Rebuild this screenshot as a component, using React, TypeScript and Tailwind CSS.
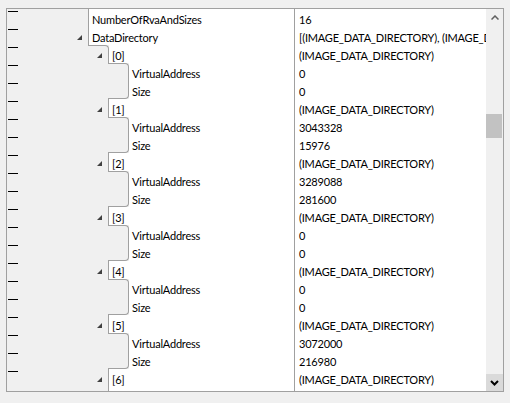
import React from 'react';

type Step = 'down' | 'up' | null;

interface TreeRow {
  name: string;
  value: string;
  level: 0 | 1 | 2;
  expandable?: boolean;
  step?: Step;
}

const rows: TreeRow[] = [
  { name: 'NumberOfRvaAndSizes', value: '16', level: 0 },
  { name: 'DataDirectory', value: '[(IMAGE_DATA_DIRECTORY), (IMAGE_DATA_DIRECTORY)]', level: 0, expandable: true },
];

const dirs = [
  ['0', '0'],
  ['3043328', '15976'],
  ['3289088', '281600'],
  ['0', '0'],
  ['0', '0'],
  ['3072000', '216980'],
];

dirs.forEach(([va, size], i) => {
  rows.push({ name: `[${i}]`, value: '(IMAGE_DATA_DIRECTORY)', level: 1, expandable: true, step: i === 0 ? 'down' : null });
  rows.push({ name: 'VirtualAddress', value: va, level: 2, step: 'down' });
  rows.push({ name: 'Size', value: size, level: 2, step: 'up' });
});
rows.push({ name: '[6]', value: '(IMAGE_DATA_DIRECTORY)', level: 1, expandable: true });

function Expander() {
  return (
    <svg width="5" height="5" viewBox="0 0 5 5" className="block">
      <polygon points="5,0 5,5 0,5" fill="#404040" />
    </svg>
  );
}

function Dash() {
  return <div className="ml-[1px] mt-[2px] h-px w-[10px] shrink-0 bg-black" />;
}

function Row({ row }: { row: TreeRow }) {
  const { level, step } = row;
  const nameText = (
    <span className="pt-[2px] pl-[3px] leading-[17px] whitespace-nowrap">{row.name}</span>
  );

  let nameCol: React.ReactNode;
  if (step === 'down') {
    // first child of an expanded node: the outline steps right at the top of this row
    nameCol = (
      <>
        <div className={level === 1 ? 'flex w-[81px] shrink-0' : 'flex w-[101px] shrink-0'}>
          <Dash />
        </div>
        <div className="flex w-[21px] shrink-0 items-start justify-end rounded-tr-[4px] border-t border-r border-[#a0a0a0] pt-[7px] pr-[6px]">
          {row.expandable && <Expander />}
        </div>
        <div className="flex flex-1 bg-white">{nameText}</div>
      </>
    );
  } else if (step === 'up') {
    // last child: the outline steps back left at the bottom of this row
    nameCol = (
      <>
        <div className="flex w-[101px] shrink-0">
          <Dash />
        </div>
        <div className="w-[21px] shrink-0 rounded-br-[4px] border-r border-b border-[#a0a0a0]" />
        <div className="flex flex-1 bg-white">{nameText}</div>
      </>
    );
  } else {
    const gutter =
      level === 0 ? 'flex w-[81px] shrink-0' : level === 1 ? 'flex w-[101px] shrink-0' : 'flex w-[121px] shrink-0';
    nameCol = (
      <>
        <div className={gutter}>
          <Dash />
          <div className="flex flex-1 items-start justify-end pt-[8px] pr-[6px]">
            {row.expandable && <Expander />}
          </div>
        </div>
        <div className="flex flex-1 border-l border-[#a0a0a0] bg-white">{nameText}</div>
      </>
    );
  }

  return (
    <div className="flex h-[18px] shrink-0">
      <div className="flex w-[287px] shrink-0">{nameCol}</div>
      <div className="flex-1 overflow-hidden border-l border-[#a0a0a0] bg-white pt-[2px] pl-[4px] leading-[17px] whitespace-nowrap">
        {row.value}
      </div>
    </div>
  );
}

export default function App() {
  return (
    <div className="h-[403px] w-[510px] overflow-hidden bg-[#f0f0f0] pt-[8px] pl-[6px] font-['Lato',sans-serif] text-[11px] tracking-[-0.2px] text-black">
      <div className="flex h-[384px] w-[498px] border border-[#a0a0a0] bg-[#f0f0f0]">
        {/* property tree */}
        <div className="flex flex-1 flex-col overflow-hidden">
          {rows.map((r, i) => (
            <Row key={i} row={r} />
          ))}
          <div className="flex flex-1">
            <div className="flex w-[287px] shrink-0">
              <div className="w-[101px] shrink-0" />
              <div className="flex-1 border-l border-[#a0a0a0] bg-white" />
            </div>
            <div className="flex-1 border-l border-[#a0a0a0] bg-white" />
          </div>
        </div>

        {/* scrollbar */}
        <div className="flex w-[17px] shrink-0 flex-col bg-[#f0f0f0]">
          <div className="flex h-[17px] items-center justify-center">
            <svg width="8" height="5" viewBox="0 0 8 5">
              <polyline points="0.5,4.5 4,1 7.5,4.5" fill="none" stroke="#606060" strokeWidth="1.5" />
            </svg>
          </div>
          <div className="flex-1">
            <div className="mt-[88px] h-[24px] w-[16px] bg-[#c2c2c2]" />
          </div>
          <div className="flex h-[17px] items-center justify-center bg-[#dadada]">
            <svg width="9" height="6" viewBox="0 0 9 6">
              <polyline points="1,1 4.5,4.5 8,1" fill="none" stroke="#000" strokeWidth="2" />
            </svg>
          </div>
        </div>
      </div>
    </div>
  );
}
